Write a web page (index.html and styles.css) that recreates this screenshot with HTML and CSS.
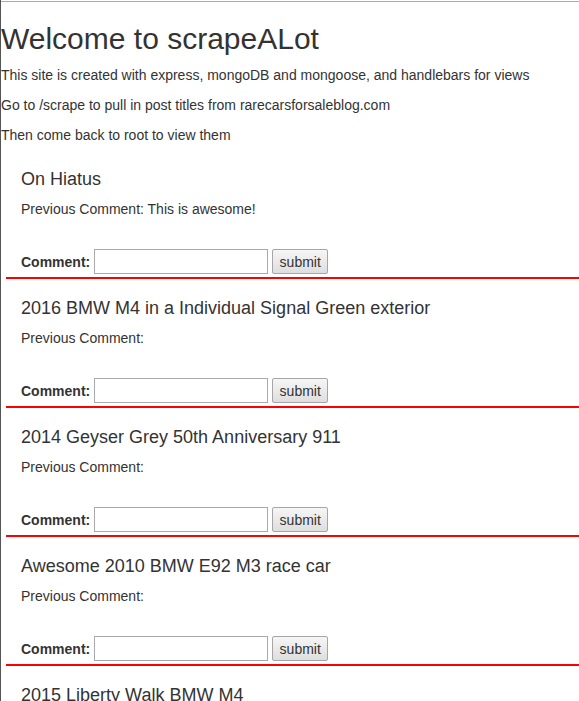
FILE: index.html
```html
<!DOCTYPE html>
<html>
<head>
<meta charset="utf-8">
<title>scrapeALot</title>
<link rel="stylesheet" href="styles.css">
</head>
<body>
<div class="page">
  <div class="intro">
    <h2 class="title">Welcome to scrapeALot</h2>
    <p>This site is created with express, mongoDB and mongoose, and handlebars for views</p>
    <p>Go to /scrape to pull in post titles from rarecarsforsaleblog.com</p>
    <p>Then come back to root to view them</p>
  </div>
  <div class="articles">
    <div class="item">
      <h4 class="item-title">On Hiatus</h4>
      <p class="prev">Previous Comment: This is awesome!</p>
      <form class="comment-form">
        <label class="comment-label">Comment:</label>
        <input class="comment-input" type="text">
        <button class="comment-btn" type="button">submit</button>
      </form>
    </div>
    <div class="item">
      <h4 class="item-title">2016 BMW M4 in a Individual Signal Green exterior</h4>
      <p class="prev">Previous Comment: </p>
      <form class="comment-form">
        <label class="comment-label">Comment:</label>
        <input class="comment-input" type="text">
        <button class="comment-btn" type="button">submit</button>
      </form>
    </div>
    <div class="item">
      <h4 class="item-title">2014 Geyser Grey 50th Anniversary 911</h4>
      <p class="prev">Previous Comment: </p>
      <form class="comment-form">
        <label class="comment-label">Comment:</label>
        <input class="comment-input" type="text">
        <button class="comment-btn" type="button">submit</button>
      </form>
    </div>
    <div class="item">
      <h4 class="item-title">Awesome 2010 BMW E92 M3 race car</h4>
      <p class="prev">Previous Comment: </p>
      <form class="comment-form">
        <label class="comment-label">Comment:</label>
        <input class="comment-input" type="text">
        <button class="comment-btn" type="button">submit</button>
      </form>
    </div>
    <div class="item">
      <h4 class="item-title">2015 Liberty Walk BMW M4</h4>
      <p class="prev">Previous Comment: </p>
      <form class="comment-form">
        <label class="comment-label">Comment:</label>
        <input class="comment-input" type="text">
        <button class="comment-btn" type="button">submit</button>
      </form>
    </div>
  </div>
</div>
</body>
</html>
```

FILE: styles.css
```css
html, body {
  background: #ffffff;
}
body {
  margin: 0;
  padding-top: 1px;
  border-left: 1px solid #555555;
  min-height: 100vh;
  box-sizing: border-box;
  font-family: "Liberation Sans", Arial, sans-serif;
  font-size: 14px;
  line-height: 20px;
  color: #333333;
}
.page {
  border-top: 1px solid #ababab;
}
.title {
  font-size: 30px;
  font-weight: 500;
  line-height: 1.1;
  margin: 20px 0 10px;
}
.intro p {
  margin: 0 0 10px;
}
.intro p:last-child {
  margin-bottom: 5px;
}
.item {
  margin-left: 5px;
  padding: 9px 15px 3px;
  border-bottom: 2px solid #ff0000;
}
.item-title {
  font-size: 18px;
  font-weight: 500;
  line-height: 20px;
  margin: 10px 0 10px;
}
.prev {
  margin: 0 0 30px;
}
.comment-form {
  display: flex;
  align-items: center;
  gap: 4px;
  height: 25px;
  margin: 0;
}
.comment-label {
  font-weight: bold;
}
.comment-input {
  box-sizing: border-box;
  width: 174px;
  height: 25px;
  border: 1px solid #a9a9a9;
  padding: 1px 2px;
  font: inherit;
  background: #fff;
}
.comment-btn {
  box-sizing: border-box;
  width: 56px;
  height: 25px;
  padding: 0 6px;
  border: 1px solid #a6a6a6;
  border-radius: 2px;
  background: linear-gradient(#f6f6f6, #dedede);
  font: inherit;
  color: #333333;
}
```
